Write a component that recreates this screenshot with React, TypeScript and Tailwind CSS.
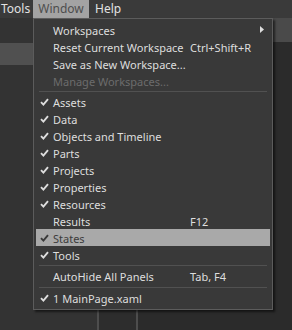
import React from 'react';

type Item =
  | { kind: 'item'; label: string; checked?: boolean; shortcut?: string; submenu?: boolean; disabled?: boolean; active?: boolean }
  | { kind: 'sep'; last?: boolean };

const items: Item[] = [
  { kind: 'item', label: 'Workspaces', submenu: true },
  { kind: 'item', label: 'Reset Current Workspace', shortcut: 'Ctrl+Shift+R' },
  { kind: 'item', label: 'Save as New Workspace...' },
  { kind: 'item', label: 'Manage Workspaces...', disabled: true },
  { kind: 'sep' },
  { kind: 'item', label: 'Assets', checked: true },
  { kind: 'item', label: 'Data', checked: true },
  { kind: 'item', label: 'Objects and Timeline', checked: true },
  { kind: 'item', label: 'Parts', checked: true },
  { kind: 'item', label: 'Projects', checked: true },
  { kind: 'item', label: 'Properties', checked: true },
  { kind: 'item', label: 'Resources', checked: true },
  { kind: 'item', label: 'Results', shortcut: 'F12' },
  { kind: 'item', label: 'States', checked: true, active: true },
  { kind: 'item', label: 'Tools', checked: true },
  { kind: 'sep' },
  { kind: 'item', label: 'AutoHide All Panels', shortcut: 'Tab, F4' },
  { kind: 'sep', last: true },
  { kind: 'item', label: '1 MainPage.xaml', checked: true },
];

const Check = ({ dark }: { dark?: boolean }) => (
  <svg width="9" height="8" viewBox="0 0 9 8" className="block">
    <path d="M1 4.2 L3.4 6.6 L8 1.2" fill="none" stroke={dark ? '#3a3a3a' : '#dedede'} strokeWidth="1.9" />
  </svg>
);

const MenuRow = ({ item }: { item: Extract<Item, { kind: 'item' }> }) => (
  <div
    className={`mx-[2px] h-[17px] flex items-center ${item.active ? 'bg-[#a9a9a9] text-[#3c3c3c]' : item.disabled ? 'text-[#6c6c6c]' : 'text-[#dedede]'}`}
  >
    <div className="w-[17px] pl-[4px] flex items-center">{item.checked && <Check dark={item.active} />}</div>
    <div className="w-[137px] whitespace-nowrap pt-[1px]">{item.label}</div>
    <div className="flex-1 whitespace-nowrap pt-[1px]">{item.shortcut}</div>
    {item.submenu && (
      <svg width="4" height="7" viewBox="0 0 4 7" className="mr-[6px]">
        <path d="M0 0 L4 3.5 L0 7 Z" fill="#dedede" />
      </svg>
    )}
  </div>
);

export default function App() {
  return (
    <div
      className="relative w-[292px] h-[330px] overflow-hidden bg-[#333333] text-[11px] leading-none"
      style={{ fontFamily: '"Noto Sans", "Open Sans", sans-serif' }}
    >
      {/* menubar */}
      <div className="h-[18px] bg-[#3a3a3a] flex items-stretch text-[#e2e2e2] text-[12px]">
        <div className="pl-[1px] w-[33px] flex items-center">Tools</div>
        <div className="w-[56px] bg-[#a3a3a3] text-[#4e4e4e] flex items-center justify-center">Window</div>
        <div className="pl-[6px] flex items-center">Help</div>
      </div>

      {/* workspace behind */}
      <div className="flex h-[312px]">
        <div className="w-[97px] flex flex-col">
          <div className="h-[25px] bg-[#333333]" />
          <div className="h-[22px] bg-[#505050]" />
          <div className="flex-1 bg-[#333333]" />
        </div>
        <div className="w-[2px] bg-[#4d4d4d]" />
        <div className="flex-1 flex flex-col">
          <div className="h-[24px] bg-[#4a4a4a]" />
          <div className="flex-1 flex">
            <div className="w-[37px] bg-[#2d2d2d]" />
            <div className="w-[2px] bg-[#4d4d4d]" />
            <div className="flex-1 bg-[#2b2b2b]" />
          </div>
        </div>
      </div>

      {/* dropdown */}
      <div className="absolute left-[33px] top-[18px] w-[240px] border border-[#5c5c5c] bg-[#393939] pt-[2px] pb-[3px] shadow-[2px_2px_2px_rgba(0,0,0,0.55)]">
        {items.map((it, i) =>
          it.kind === 'sep' ? (
            <div key={i} className={it.last ? 'h-[5px] pt-[3px] px-[5px]' : 'h-[4px] pt-[2px] px-[5px]'}>
              <div className="h-[1px] bg-[#515151]" />
            </div>
          ) : (
            <MenuRow key={i} item={it} />
          )
        )}
      </div>
    </div>
  );
}
